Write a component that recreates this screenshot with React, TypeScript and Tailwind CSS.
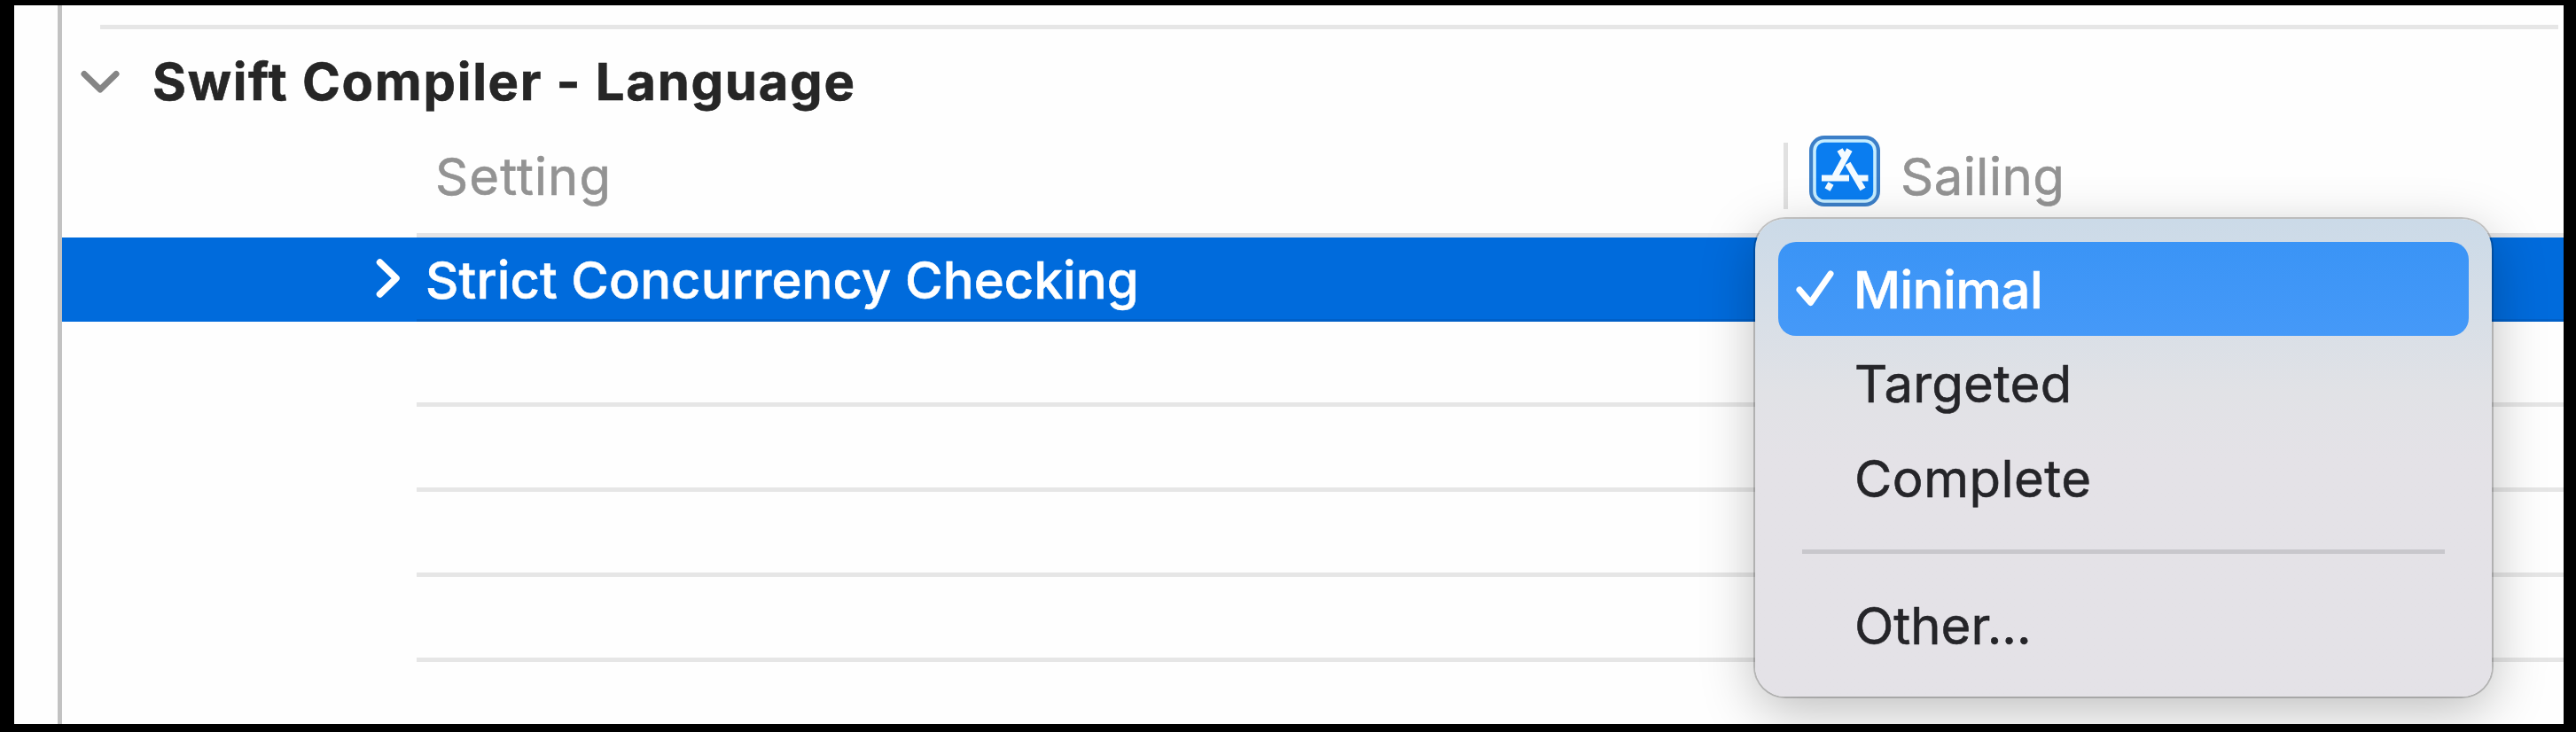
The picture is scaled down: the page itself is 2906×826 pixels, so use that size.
import React from "react";

const emptyRows = [0, 1, 2, 3];

function ChevronDown() {
  return (
    <svg className="h-[28px] w-[46px]" viewBox="0 0 46 28" fill="none">
      <path d="M5 5.5 L23 23 L41 5.5" stroke="#858585" strokeWidth="7" strokeLinecap="round" strokeLinejoin="round" />
    </svg>
  );
}

function ChevronRight() {
  return (
    <svg className="h-[46px] w-[30px]" viewBox="0 0 30 46" fill="none">
      <path d="M5.5 5 L24 23 L5.5 41" stroke="#fff" strokeWidth="7.5" strokeLinecap="round" strokeLinejoin="round" />
    </svg>
  );
}

function AppStoreIcon() {
  return (
    <svg className="h-[80px] w-[80px]" viewBox="0 0 80 80" fill="none">
      <rect width="80" height="80" rx="17" fill="#3c7fc8" />
      <rect x="6" y="6" width="68" height="68" rx="11" fill="#0a7df0" stroke="#c6edff" strokeWidth="3.6" />
      <g stroke="#f4fbff" strokeWidth="7">
        <path d="M45.5 16 L29 46" />
        <path d="M34.5 16 L39 23.5" />
        <path d="M43.5 31.5 L60.5 60.5" />
        <path d="M14 48 H45" />
        <path d="M53 48 H66.5" />
        <path d="M24.5 54 L20.5 61" />
      </g>
    </svg>
  );
}

function CheckMark() {
  return (
    <svg className="h-[44px] w-[46px]" viewBox="0 0 46 44" fill="none">
      <path d="M5 23 L17.5 37.5 L40 5" stroke="#fff" strokeWidth="7" strokeLinecap="round" strokeLinejoin="round" />
    </svg>
  );
}

function PopupMenu() {
  return (
    <div className="absolute left-[1964px] top-[241px] flex h-[539px] w-[831px] flex-col rounded-[34px] bg-linear-to-b from-[#cbdae8] via-[#e1e2e6] via-36% to-[#e4e2e7] to-50% pt-[26px] text-[#252529] shadow-[0_0_0_2px_rgba(0,0,0,0.2),0_16px_60px_rgba(0,0,0,0.26)]">
      <div className="ml-[26px] flex h-[106px] w-[779px] items-center rounded-[20px] bg-linear-to-b from-[#3a94f6] to-[#4599f8] pl-[19px] text-white">
        <CheckMark />
        <span className="ml-[20px] pt-px font-medium tracking-[-0.4px]">Minimal</span>
      </div>
      <div className="flex h-[107px] items-center pl-[112px] tracking-[0.2px]">Targeted</div>
      <div className="flex h-[107px] items-center pl-[112px] tracking-[0.5px]">Complete</div>
      <div className="ml-[53px] mt-[27px] h-[5px] w-[725px] bg-[#c8c7cc]" />
      <div className="mt-[27px] flex h-[107px] items-center pl-[112px]">Other...</div>
    </div>
  );
}

export default function App() {
  return (
    <div className="h-[826px] w-[2906px] bg-black pl-[16px] pt-[6px] font-['Inter',sans-serif] text-[58px] font-normal leading-none [-webkit-text-stroke:0.6px_currentColor] [font-feature-settings:'calt'_0]">
      <main className="relative flex h-[811px] w-[2876px] overflow-hidden bg-[#fefefe]">
        <div className="w-[54px] shrink-0 border-r-[5px] border-[#c2c2c2]" />
        <section className="flex min-w-0 flex-1 flex-col">
          <div className="ml-[43px] mr-[6px] mt-[22px] h-[5px] shrink-0 bg-[#e6e6e6]" />
          <header className="flex h-[117px] shrink-0 items-center pl-[20px]">
            <ChevronDown />
            <h1 className="ml-[36px] whitespace-nowrap pt-px font-bold tracking-[1.7px] text-[#262626]">Swift Compiler - Language</h1>
          </header>
          <div className="flex h-[113px] shrink-0 text-[#939393]">
            <div className="w-[1942px] shrink-0 pl-[421px] pt-[20px] tracking-[1.1px]">Setting</div>
            <div className="mt-[11px] h-[75px] w-[5px] bg-[#e1e1e1]" />
            <div className="ml-[24px] mt-[3px]"><AppStoreIcon /></div>
            <div className="ml-[23px] pt-[20px] tracking-[0.5px]">Sailing</div>
          </div>
          <div className="ml-[400px] h-[5px] shrink-0 bg-[#e4e4e6]" />
          <div className="flex h-[95px] shrink-0 flex-col bg-[#006bdc]">
            <div className="flex h-[92px] items-center pl-[353px] text-white">
              <ChevronRight />
              <span className="ml-[27px] whitespace-nowrap pt-[4px] font-medium tracking-[0.1px]">Strict Concurrency Checking</span>
            </div>
            <div className="ml-[400px] h-[3px] bg-[#0060c8]" />
          </div>
          {emptyRows.map((row) => (
            <div key={row} className="ml-[400px] h-[96px] shrink-0 border-b-[5px] border-[#e6e6e6]" />
          ))}
        </section>
        <PopupMenu />
      </main>
    </div>
  );
}
